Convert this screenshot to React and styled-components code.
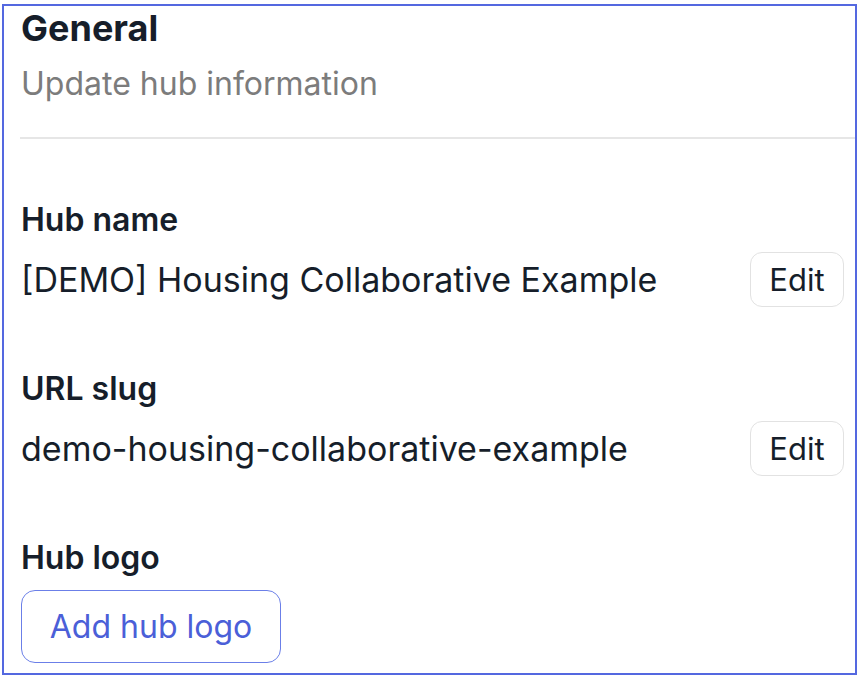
import React from 'react';
import styled, { createGlobalStyle } from 'styled-components';

const GlobalStyle = createGlobalStyle`
  html, body {
    margin: 0;
    padding: 0;
    background: #ffffff;
  }
  body {
    font-family: Inter, "Noto Sans", "Liberation Sans", sans-serif;
    color: #1b2431;
  }
`;

const Frame = styled.div`
  box-sizing: border-box;
  margin: 4px 2px 0 2px;
  width: 855px;
  height: 671px;
  border: 2px solid #5468e0;
  overflow: hidden;
`;

const Header = styled.header`
  padding: 0 0 0 17px;
`;

const Title = styled.h1`
  margin: 0;
  font-size: 36px;
  line-height: 44px;
  font-weight: 700;
  color: #161e2a;
`;

const Subtitle = styled.p`
  margin: 14px 0 0;
  font-size: 32px;
  line-height: 40px;
  font-weight: 400;
  color: #7c7c7c;
`;

const Divider = styled.hr`
  margin: 33px 0 0 16px;
  border: none;
  border-top: 2px solid #e6e6e6;
`;

const Body = styled.div`
  padding: 61px 11px 0 17px;
  display: flex;
  flex-direction: column;
  gap: 62px;
`;

const Field = styled.section`
  display: flex;
  flex-direction: column;
  gap: 12px;
`;

const Label = styled.div`
  font-size: 32px;
  line-height: 40px;
  font-weight: 600;
  color: #161e2a;
`;

const Row = styled.div`
  display: flex;
  align-items: center;
  justify-content: space-between;
`;

const Value = styled.div`
  font-size: 34px;
  line-height: 40px;
  color: #161e2a;
`;

const EditButton = styled.button`
  box-sizing: border-box;
  width: 94px;
  height: 55px;
  border: 1.5px solid #e2e2e2;
  border-radius: 12px;
  background: #ffffff;
  font-family: inherit;
  font-size: 31px;
  color: #161e2a;
  padding: 0;
`;

const AddButton = styled.button`
  box-sizing: border-box;
  width: 260px;
  height: 73px;
  border: 1.5px solid #6b7fe8;
  border-radius: 14px;
  background: #ffffff;
  font-family: inherit;
  font-size: 32px;
  color: #4b5fd8;
  padding: 0;
  align-self: flex-start;
`;

export default function App() {
  return (
    <>
      <GlobalStyle />
      <Frame>
        <Header>
          <Title>General</Title>
          <Subtitle>Update hub information</Subtitle>
        </Header>
        <Divider />
        <Body>
          <Field>
            <Label>Hub name</Label>
            <Row>
              <Value>[DEMO] Housing Collaborative Example</Value>
              <EditButton>Edit</EditButton>
            </Row>
          </Field>
          <Field>
            <Label>URL slug</Label>
            <Row>
              <Value>demo-housing-collaborative-example</Value>
              <EditButton>Edit</EditButton>
            </Row>
          </Field>
          <Field>
            <Label>Hub logo</Label>
            <AddButton>Add hub logo</AddButton>
          </Field>
        </Body>
      </Frame>
    </>
  );
}
